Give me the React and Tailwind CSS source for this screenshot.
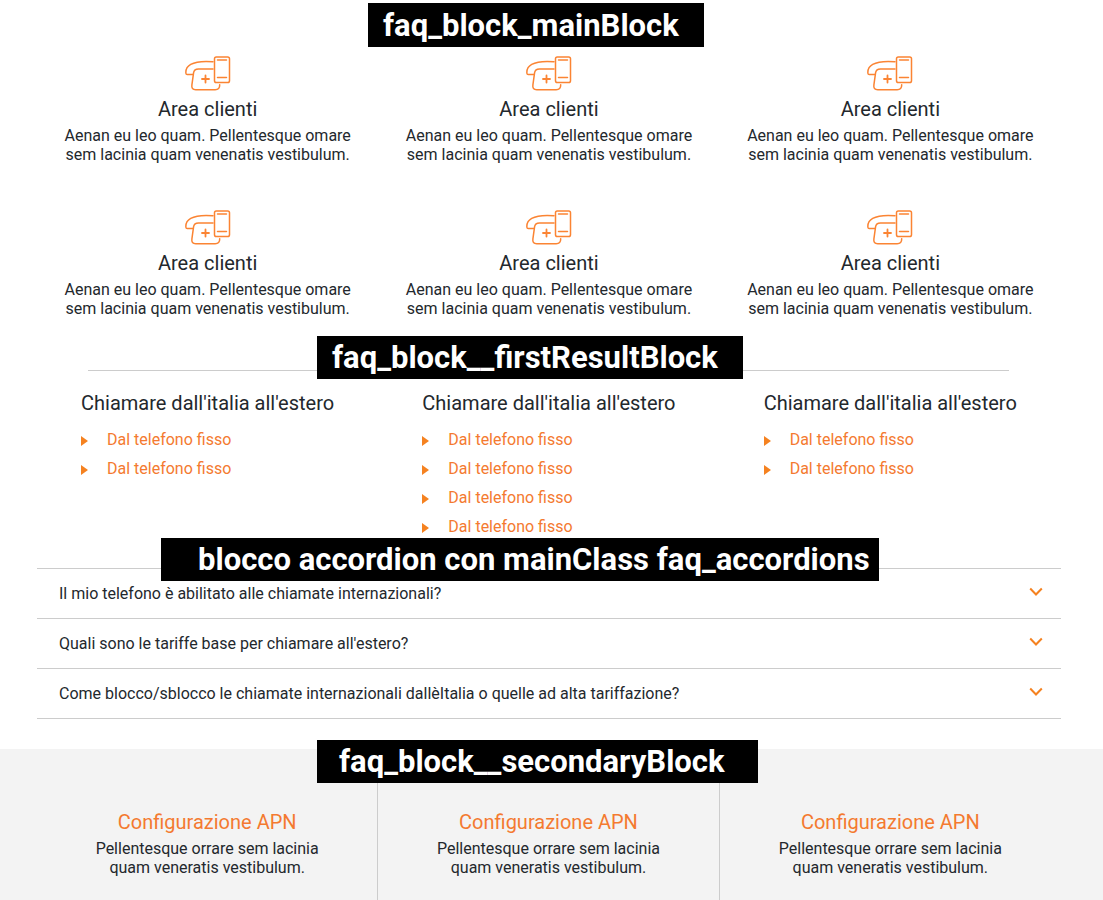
import React, { useState } from "react";

const services = Array.from({ length: 6 }, (_, i) => i);
const results = [2, 4, 2];
const questions = [
  "Il mio telefono è abilitato alle chiamate internazionali?",
  "Quali sono le tariffe base per chiamare all'estero?",
  "Come blocco/sblocco le chiamate internazionali dallèItalia o quelle ad alta tariffazione?",
];
const configs = ["a", "b", "c"];

function PhoneIcon() {
  return (
    <svg
      aria-hidden="true"
      width="46"
      height="36"
      viewBox="0 0 46 36"
      fill="none"
      stroke="#fb8433"
      strokeWidth="1.5"
      strokeLinecap="round"
      strokeLinejoin="round"
    >
      <path d="M28 5.700C19.500 5 11 5.400 5.700 8.400C1.800 10.600 .6 13.800 .9 17.200c.1 1 .5 1.300 1.300 1.300h5.600" />
      <path d="M28 12.900H13.500c-3 0-4.500 1.200-4.900 3.800L6.900 28.800c-.5 3.400.8 4.900 3.800 4.900h19.500c3 0 4.600-1.500 4.500-5" />
      <path d="M20.500 19.500v7M17 23h7" strokeWidth="1.800" />
      <rect x="29.500" y="1" width="15" height="25.500" rx="1.800" />
      <path d="M32.500 4h9M32.500 21.500h9" />
    </svg>
  );
}

function Chevron({ open }) {
  return (
    <svg
      aria-hidden="true"
      width="14"
      height="10"
      viewBox="0 0 14 10"
      fill="none"
      stroke="#f58220"
      strokeWidth="2"
      className={open ? "mb-1 rotate-180" : "mb-1"}
    >
      <path d="M1.200 1.500L7 7.500l5.800-6" />
    </svg>
  );
}

function Label({ className, children }) {
  return (
    <h2
      className={`absolute z-10 flex items-center whitespace-nowrap bg-black text-[31px] leading-none font-bold text-white ${className}`}
    >
      {children}
    </h2>
  );
}

export default function App() {
  const [open, setOpen] = useState(null);
  return (
    <main className="flex min-h-screen flex-col bg-white font-['Roboto','Liberation_Sans',sans-serif] text-base text-[#23282d]">
      <section className="relative grid grid-cols-3 gap-y-[46px] pt-14 pr-[42px] pl-[37px]">
        <Label className="top-[3px] left-[368px] h-11 w-[336px] pl-[15px]">faq_block_mainBlock</Label>
        {services.map((id) => (
          <article key={id} className="flex flex-col items-center text-center">
            <PhoneIcon />
            <h3 className="mt-[5px] text-xl leading-6">Area clienti</h3>
            <p className="mt-[5px] leading-[19px]">
              Aenan eu leo quam. Pellentesque omare
              <br />
              sem lacinia quam venenatis vestibulum.
            </p>
          </article>
        ))}
      </section>

      <section className="relative pt-[52px] pr-[42px] pl-[37px]">
        <Label className="top-[18px] left-[317px] h-[43px] w-[426px] pl-[15px]">faq_block__firstResultBlock</Label>
        <hr className="mr-[52px] ml-[51px] border-[#cccccc]" />
        <div className="mt-5 grid grid-cols-3">
          {results.map((count, col) => (
            <div key={col} className="pl-11">
              <h3 className="text-xl leading-6">Chiamare dall'italia all'estero</h3>
              <ul className="mt-[10px]">
                {Array.from({ length: count }, (_, i) => (
                  <li key={i} className="flex h-[29px] items-center gap-[19px]">
                    <svg
                      aria-hidden="true"
                      width="7"
                      height="10"
                      viewBox="0 0 7 10"
                      fill="#f58220"
                      className="mt-[2px]"
                    >
                      <path d="M0 0l7 5-7 5z" />
                    </svg>
                    <a href="#telefono" className="text-[#f47a30]">
                      Dal telefono fisso
                    </a>
                  </li>
                ))}
              </ul>
            </div>
          ))}
        </div>
      </section>

      <section className="relative mt-[27px] pr-[42px] pl-[37px]">
        <Label className="-top-[30px] left-[161px] h-[43px] w-[718px] pl-[37px]">
          blocco accordion con mainClass faq_accordions
        </Label>
        <div className="border-t border-[#cccccc]">
          {questions.map((q, i) => (
            <div key={q} className="border-b border-[#cccccc]">
              <button
                type="button"
                aria-expanded={open === i}
                onClick={() => setOpen(open === i ? null : i)}
                className="flex h-[49px] w-full items-center justify-between pr-[18px] pl-[22px] text-left"
              >
                <span>{q}</span>
                <Chevron open={open === i} />
              </button>
            </div>
          ))}
        </div>
      </section>

      <section className="relative mt-[30px] grid grow grid-cols-3 bg-[#f3f3f3] pr-[42px] pl-[37px]">
        <Label className="-top-[9px] left-[317px] h-[43px] w-[441px] pl-[22px]">faq_block__secondaryBlock</Label>
        {configs.map((id) => (
          <article key={id} className="border-r border-[#cccccc] pt-[61px] pb-[23px] text-center last:border-r-0">
            <h3 className="text-xl leading-6 text-[#f47a30]">Configurazione APN</h3>
            <p className="mt-[5px] leading-[19px]">
              Pellentesque orrare sem lacinia
              <br />
              quam veneratis vestibulum.
            </p>
          </article>
        ))}
      </section>
    </main>
  );
}
